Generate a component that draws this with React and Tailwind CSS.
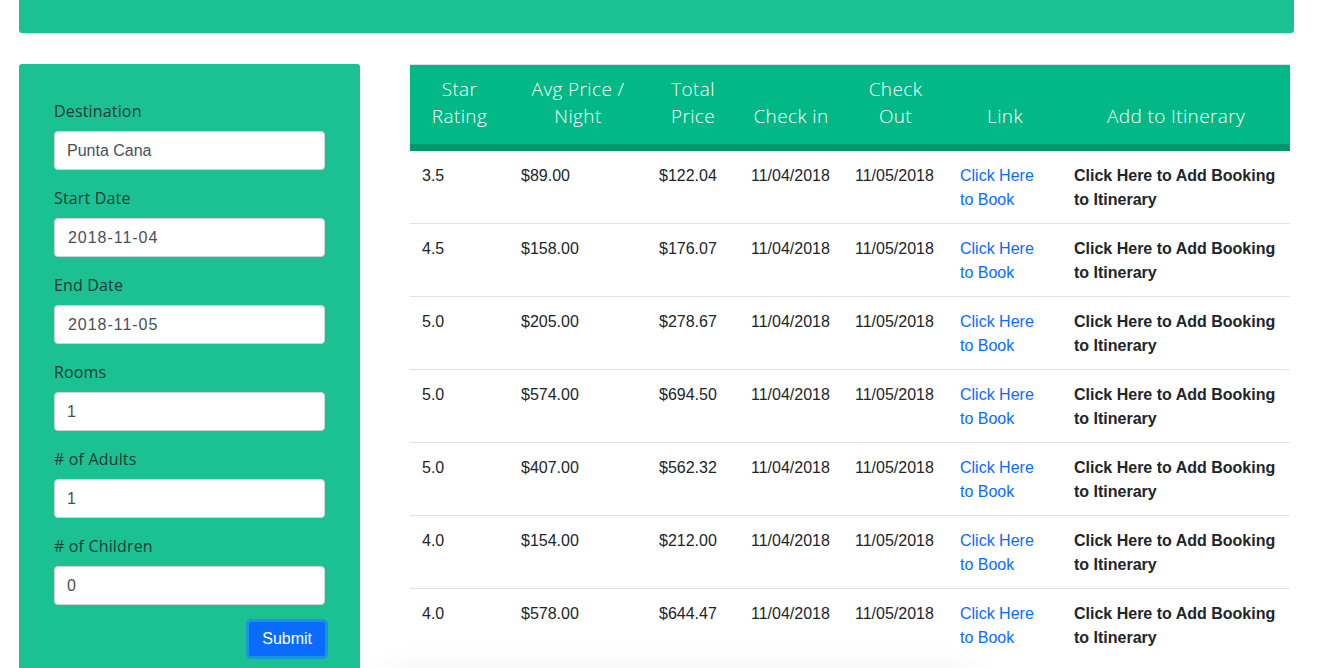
import React from 'react';

const hotels = [
    { stars: '3.5', avg: '$89.00', total: '$122.04' },
    { stars: '4.5', avg: '$158.00', total: '$176.07' },
    { stars: '5.0', avg: '$205.00', total: '$278.67' },
    { stars: '5.0', avg: '$574.00', total: '$694.50' },
    { stars: '5.0', avg: '$407.00', total: '$562.32' },
    { stars: '4.0', avg: '$154.00', total: '$212.00' },
    { stars: '4.0', avg: '$578.00', total: '$644.47' },
];

const fields = [
    { label: 'Destination', value: 'Punta Cana', mono: false },
    { label: 'Start Date', value: '2018-11-04', mono: true },
    { label: 'End Date', value: '2018-11-05', mono: true },
    { label: 'Rooms', value: '1', mono: false },
    { label: '# of Adults', value: '1', mono: false },
    { label: '# of Children', value: '0', mono: false },
];

const columns = [
    { title: ['Star', 'Rating'], w: 'w-[99px]' },
    { title: ['Avg Price /', 'Night'], w: 'w-[138px]' },
    { title: ['Total', 'Price'], w: 'w-[92px]' },
    { title: ['Check in'], w: 'w-[104px]' },
    { title: ['Check', 'Out'], w: 'w-[105px]' },
    { title: ['Link'], w: 'w-[114px]' },
    { title: ['Add to Itinerary'], w: 'w-[228px]' },
];

const labelFont = "font-['Open_Sans','DejaVu_Sans',sans-serif]";
const bodyFont = "font-['Liberation_Sans',Arial,sans-serif]";

const SearchPanel = () => (
    <div className="w-[341px] shrink-0 bg-[#1bc192] rounded-t-[3px] px-[35px] pt-[35px] pb-8 min-h-[620px]">
        {fields.map(f => (
            <div key={f.label} className="mb-4">
                <label className={`block text-[16px] leading-6 mb-2 text-[#1d3b33] tracking-[0.01em] ${labelFont}`}>{f.label}</label>
                <input
                    readOnly
                    value={f.value}
                    className={`block w-full h-[39px] px-3 bg-white border border-[#ced4da] rounded text-[16px] text-[#495057] outline-none ${bodyFont} ${f.mono ? 'tracking-[0.06em] pl-[13px]' : ''}`}
                />
            </div>
        ))}
        <div className="flex justify-end -mt-[2px] -mr-[3px]">
            <button className={`h-10 px-[13px] rounded-[5px] bg-[#0a6cff] text-white text-[16px] border-[3px] border-[#1795e0] ${bodyFont}`}>
                Submit
            </button>
        </div>
    </div>
);

const ResultsTable = () => (
    <div className="w-[880px] relative">
        <table className={`w-full border-collapse text-[16px] text-[#212529] ${bodyFont}`}>
            <thead>
                <tr className="bg-[#02b886] border-t border-[#dee2e6] border-b-[7px] border-b-[#03966f]">
                    {columns.map(c => (
                        <th key={c.title.join()} className={`${c.w} align-bottom pt-[11px] pb-[14px] px-2 text-center font-light text-[19px] leading-[27px] text-white tracking-[0.02em] ${labelFont}`}>
                            {c.title.map(t => <div key={t}>{t}</div>)}
                        </th>
                    ))}
                </tr>
            </thead>
            <tbody>
                {hotels.map((h, i) => (
                    <tr key={i} className={`border-t ${i > 0 ? 'border-[#dee2e6]' : 'border-white'}`}>
                        <td className="px-3 pt-[13px] pb-[11px] align-top leading-6">{h.stars}</td>
                        <td className="px-3 pt-[13px] pb-[11px] align-top leading-6">{h.avg}</td>
                        <td className="px-3 pt-[13px] pb-[11px] align-top leading-6">{h.total}</td>
                        <td className="px-3 pt-[13px] pb-[11px] align-top leading-6">11/04/2018</td>
                        <td className="px-3 pt-[13px] pb-[11px] align-top leading-6">11/05/2018</td>
                        <td className="px-3 pt-[13px] pb-[11px] align-top leading-6">
                            <a className="text-[#0a6cff]">Click Here<br />to Book</a>
                        </td>
                        <td className="px-3 pt-[13px] pb-[11px] align-top leading-6 font-bold">
                            Click Here to Add Booking<br />to Itinerary
                        </td>
                    </tr>
                ))}
            </tbody>
        </table>
        {/* card peeking from below the table */}
        <div className="absolute left-[-30px] top-[606px] w-[600px] h-24 rounded-3xl bg-white shadow-[0_0_30px_rgba(0,0,0,0.08)] pointer-events-none opacity-60" />
    </div>
);

export default function App() {
    return (
        <div className="w-[1325px] h-[668px] overflow-hidden bg-white">
            <div className="mx-[19px] w-[1275px] h-[33px] bg-[#1bc192] rounded-b-[3px]" />
            <div className="flex gap-[50px] pl-[19px] mt-[31px]">
                <SearchPanel />
                <ResultsTable />
            </div>
        </div>
    );
}
